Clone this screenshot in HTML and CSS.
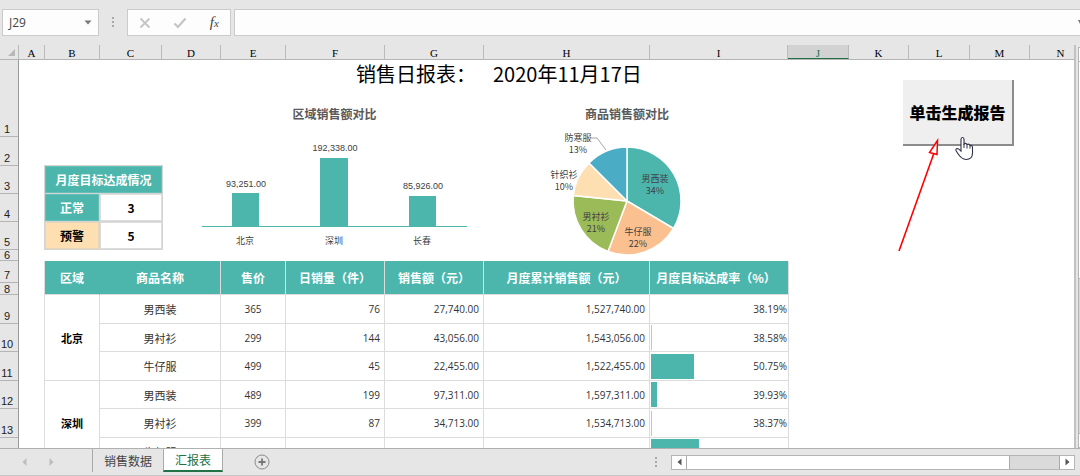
FILE: index.html
```html
<!DOCTYPE html>
<html lang="zh-CN">
<head>
<meta charset="utf-8">
<title>销售日报表</title>
<link rel="stylesheet" href="styles.css">
</head>
<body>
<header class="formula-bar">
  <button class="name-box" type="button"><span>J29</span><svg width="8" height="5" viewBox="0 0 8 5"><path d="M0.500 0.500h7L4 4.500z" fill="#777"/></svg></button>
  <svg class="grip" width="3" height="11" viewBox="0 0 3 11" fill="#a8a8a8"><path d="M0 0h2v2H0zM0 4h2v2H0zM0 8h2v2H0z"/></svg>
  <div class="formula-tools">
    <button type="button" aria-label="取消"><svg width="12" height="12" viewBox="0 0 12 12"><path d="M1.500 1.500l9 9M10.500 1.500l-9 9" stroke="#c4c4c4" stroke-width="1.800"/></svg></button>
    <button type="button" aria-label="输入"><svg width="14" height="12" viewBox="0 0 14 12"><path d="M1.500 6.500l3.500 3.500L12.500 1.500" fill="none" stroke="#c4c4c4" stroke-width="2.200"/></svg></button>
    <button type="button" class="fx" aria-label="插入函数">f<small>x</small></button>
  </div>
  <input class="formula-input" type="text" aria-label="编辑栏">
  <svg class="expand" width="2" height="4" viewBox="0 0 2 4"><path d="M0 0h2v4z" fill="#777"/></svg>
</header>

<main class="workbook">
  <div class="grid-area">
    <div class="columns">
      <span class="corner"><svg width="7" height="7" viewBox="0 0 7 7"><path d="M7 0v7H0z" fill="#b8b8b8"/></svg></span>
      <span>A</span><span>B</span><span>C</span><span>D</span><span>E</span><span>F</span><span>G</span><span>H</span><span>I</span><span class="selected">J</span><span>K</span><span>L</span><span>M</span><span>N</span>
    </div>
    <div class="body">
      <div class="rows">
        <span>1</span><span>2</span><span>3</span><span>4</span><span>5</span><span>6</span><span>7</span><span>8</span><span>9</span><span>10</span><span>11</span><span>12</span><span>13</span><span></span>
      </div>
      <div class="sheet">
        <section class="report">
          <h1 class="title"><span>销售日报表：</span><span>2020年11月17日</span></h1>
          <div class="overview">
            <table class="summary">
              <colgroup><col class="c-state"><col></colgroup>
              <tr><th colspan="2">月度目标达成情况</th></tr>
              <tr><th>正常</th><td>3</td></tr>
              <tr><th class="warn">预警</th><td>5</td></tr>
            </table>
            <figure class="chart bar-chart">
              <figcaption>区域销售额对比</figcaption>
              <svg viewBox="0 0 265 128" width="265" height="128">
                <g fill="#4cb6ad"><path d="M30 70h27v33H30zM118 35h28v68h-28zM207 73h27v30h-27z"/><path d="M0 103h265v1H0z"/></g>
                <g class="values"><text x="44" y="64">93,251.00</text><text x="133" y="28">192,338.00</text><text x="221" y="66">85,926.00</text></g>
                <g class="labels"><text x="43" y="121">北京</text><text x="132" y="121">深圳</text><text x="220" y="121">长春</text></g>
              </svg>
            </figure>
            <figure class="chart pie-chart">
              <figcaption>商品销售额对比</figcaption>
              <svg viewBox="0 0 154 132" width="154" height="132">
                <g stroke="#fff" stroke-width="1.500" stroke-linejoin="round">
                  <path d="M77 78V24A54 54 0 0 1 123.500 105.500Z" fill="#4cb6ad"/>
                  <path d="M77 78L123.500 105.500A54 54 0 0 1 58 128.500Z" fill="#fac08f"/>
                  <path d="M77 78L58 128.500A54 54 0 0 1 23.300 72.500Z" fill="#9bbb59"/>
                  <path d="M77 78L23.300 72.500A54 54 0 0 1 39 40Z" fill="#fedfb2"/>
                  <path d="M77 78L39 40A54 54 0 0 1 77 24Z" fill="#4bacc6"/>
                </g>
                <path d="M41 15h6l9 12" fill="none" stroke="#a6a6a6"/>
                <g class="slices">
                  <text x="105" y="59">男西装</text><text x="105" y="71">34%</text>
                  <text x="88" y="112">牛仔服</text><text x="88" y="124">22%</text>
                  <text x="46" y="97">男衬衫</text><text x="46" y="109">21%</text>
                  <text x="14" y="55">针织衫</text><text x="14" y="67">10%</text>
                  <text x="28" y="18">防寒服</text><text x="28" y="30">13%</text>
                </g>
              </svg>
            </figure>
          </div>
          <table class="data">
            <colgroup><col class="c-region"><col class="c-name"><col class="c-price"><col class="c-qty"><col class="c-qty"><col class="c-total"><col class="c-rate"></colgroup>
            <thead><tr><th>区域</th><th>商品名称</th><th>售价</th><th>日销量（件）</th><th>销售额（元）</th><th>月度累计销售额（元）</th><th>月度目标达成率（%）</th></tr></thead>
            <tbody>
              <tr><th rowspan="3">北京</th><td>男西装</td><td>365</td><td>76</td><td>27,740.00</td><td>1,527,740.00</td><td>38.19%</td></tr>
              <tr><td>男衬衫</td><td>299</td><td>144</td><td>43,056.00</td><td>1,543,056.00</td><td><div class="rate"><i class="faint" style="width:1px"></i>38.58%</div></td></tr>
              <tr><td>牛仔服</td><td>499</td><td>45</td><td>22,455.00</td><td>1,522,455.00</td><td><div class="rate"><i style="width:43px"></i>50.75%</div></td></tr>
              <tr><th rowspan="3">深圳</th><td>男西装</td><td>489</td><td>199</td><td>97,311.00</td><td>1,597,311.00</td><td><div class="rate"><i style="width:6px"></i>39.93%</div></td></tr>
              <tr><td>男衬衫</td><td>399</td><td>87</td><td>34,713.00</td><td>1,534,713.00</td><td><div class="rate"><i class="faint" style="width:1px"></i>38.37%</div></td></tr>
              <tr><td>牛仔服</td><td>599</td><td>101</td><td>60,314.00</td><td>1,560,314.00</td><td><div class="rate"><i style="width:48px"></i>52.14%</div></td></tr>
            </tbody>
          </table>
        </section>
        <div class="action">
          <button class="run" type="button">单击生成报告</button>
          <svg class="pointer" width="120" height="120" viewBox="0 0 120 120">
            <path d="M4 115L39 17" stroke="#f00" stroke-width="1.600"/>
            <path d="M42.500 4.500L34.500 16.500L42 18.500Z" fill="#fff" stroke="#f00" stroke-width="1.500"/>
            <path d="M66 15V3.500Q66 1.500 67.500 1.500T69 3.500V8Q70.500 6.500 72 8.500Q74 7.500 75 9.500Q77.500 9 77.500 11.500V17C77.500 21 75 23.500 71 23.500C67 23.500 65 21 62.500 17L61 14.500Q60.500 12.500 62.500 12.500Q64 13 66 15Z" fill="#fff" stroke="#2d3047" stroke-width="1.100"/>
            <path d="M69 8v4M72 8.500v4M75 9.500v3" stroke="#2d3047"/>
          </svg>
        </div>
      </div>
    </div>
  </div>
  <div class="v-scroll"><span class="box"></span><span class="thumb"></span><span class="track"></span><span class="box"></span></div>
</main>

<footer class="tabs">
  <button class="step" type="button" aria-label="上一个"><svg width="5" height="8" viewBox="0 0 5 8"><path d="M4.500 0v8L0.500 4z" fill="#bdbdbd"/></svg></button>
  <button class="step" type="button" aria-label="下一个"><svg width="5" height="8" viewBox="0 0 5 8"><path d="M0.500 0v8l4-4z" fill="#bdbdbd"/></svg></button>
  <nav>
    <button class="tab" type="button">销售数据</button>
    <button class="tab active" type="button">汇报表</button>
  </nav>
  <button class="add" type="button" aria-label="新建工作表"><svg width="16" height="16" viewBox="0 0 16 16" fill="none"><circle cx="8" cy="8" r="7" stroke="#8a8a8a"/><path d="M8 4.500v7M4.500 8h7" stroke="#777" stroke-width="1.800"/></svg></button>
  <svg class="grip end" width="3" height="11" viewBox="0 0 3 11" fill="#a8a8a8"><path d="M0 0h2v2H0zM0 4h2v2H0zM0 8h2v2H0z"/></svg>
  <div class="h-scroll">
    <button type="button" aria-label="向左"><svg width="5" height="8" viewBox="0 0 5 8"><path d="M4.500 0.500v7L0.500 4z" fill="#555"/></svg></button>
    <span class="h-thumb"></span><span class="h-track"></span>
    <button type="button" aria-label="向右"><svg width="5" height="8" viewBox="0 0 5 8"><path d="M0.500 0.500v7l4-3.500z" fill="#555"/></svg></button>
  </div>
</footer>
</body>
</html>
```
FILE: styles.css
```css
* { box-sizing: border-box; }
body {
  margin: 0;
  height: 100vh;
  display: flex;
  flex-direction: column;
  overflow: hidden;
  background: #e6e6e6;
  color: #000;
  font: 12px/16px "Noto Sans CJK SC", sans-serif;
}
button { font: inherit; color: inherit; padding: 0; border: 0; background: none; }
svg { display: block; flex: none; }

/* formula bar */
.formula-bar { display: flex; align-items: center; height: 45px; flex: none; position: relative; }
.name-box, .formula-tools, .formula-input { height: 27px; border: 1px solid #cbcbcb; background: #fdfdfd; }
.name-box {
  width: 97px; margin-left: 2px; padding: 0 6px;
  display: flex; align-items: center; justify-content: space-between;
  font: 12px/16px "Open Sans", sans-serif; color: #444;
}
.grip { margin: 0 12px 0 13px; }
.formula-tools { width: 104px; display: flex; justify-content: space-around; align-items: center; }
.fx { font: italic 15px/18px "Liberation Serif", serif; color: #444; }
.fx small { font-size: 11px; }
.formula-input { flex: 1; min-width: 0; margin-left: 3px; border-right: 0; }
.expand { position: absolute; right: 0; top: 20px; }

/* grid */
.workbook { flex: 1; min-height: 0; display: flex; }
.grid-area { flex: 1; min-width: 0; display: flex; flex-direction: column; overflow: hidden; border-right: 2px solid #c2c2c2; }
.columns {
  display: grid;
  grid-template-columns: 19px 26px 55px 62px 59px 65px 99px 99px 166px 138px 61px 60px 61px 60px 62px;
  height: 15px; flex: none;
  border-bottom: 1px solid #b5b5b5;
  font: 11px/16px "Liberation Serif", serif;
  text-align: center;
}
.columns span { border-right: 1px solid #bbb; height: 14px; }
.columns .corner { display: flex; align-items: center; justify-content: flex-end; padding-right: 3px; }
.columns .selected { background: #d2d2d2; color: #217346; border-bottom: 1px solid #217346; }
.body { flex: 1; min-height: 0; display: flex; }
.rows {
  flex: none; width: 19px; overflow: hidden; border-right: 1px solid #999;
  display: grid;
  grid-template-rows: 77px 29px 28px 28px 28px 11px 22px 12px 29px 28px 29px 28px 29px 28px;
  font: 11px/12px "Liberation Sans", sans-serif; color: #222;
}
.rows span {
  display: flex; align-items: flex-end; justify-content: center;
  padding: 0 4px 1px 0; border-bottom: 1px solid #b5b5b5; overflow: hidden;
}
.rows span:nth-child(6), .rows span:nth-child(8) { align-items: center; padding-bottom: 0; line-height: 10px; }
.sheet { flex: 1; min-width: 0; display: flex; background: #fff; overflow: hidden; }
.report { flex: none; padding-left: 25px; }
.title { display: flex; gap: 17px; margin: 0; padding-left: 312px; font-size: 20px; font-weight: 400; line-height: 28px; }
.overview { display: flex; align-items: flex-start; height: 173px; }

/* target summary */
.summary {
  width: 119px; margin-top: 77px; border-collapse: separate; border-spacing: 1px;
  background: #d4d4d4; table-layout: fixed; text-align: center;
}
.c-state { width: 54px; }
.summary th, .summary td { height: 27px; padding: 0; font-size: 12px; font-weight: 700; line-height: 16px; border: 1px solid #ddd; }
.summary th { background: #4cb6ad; color: #fff; border-color: #65c0b8; }
.summary td { background: #fff; }
.summary .warn { background: #fedfb2; color: #000; border-color: #e8d6b8; }

/* charts */
.chart { margin: 0; text-align: center; }
.chart figcaption { font-weight: 700; color: #595959; line-height: 18px; }
.bar-chart { margin: 17px 0 0 39px; }
.pie-chart { margin: 17px 0 0 83px; }
.chart text { text-anchor: middle; fill: #404040; }
.values { font: 9px "Liberation Sans", sans-serif; }
.labels, .slices { font: 9px "Noto Sans CJK SC", sans-serif; }

/* sales table */
.data { width: 745px; table-layout: fixed; border-collapse: separate; border-spacing: 0; border-left: 1px solid #ddd; }
.c-region { width: 55px; } .c-name { width: 121px; } .c-price { width: 65px; }
.c-qty { width: 99px; } .c-total { width: 166px; } .c-rate { width: 139px; }
.data th, .data td { padding: 0; border: solid #dcdcdc; border-width: 0 1px 1px 0; }
.data thead th { height: 34px; background: #4cb6ad; color: #fff; font-weight: 700; white-space: nowrap; }
.data thead th:first-child { border-right-color: #4cb6ad; }
.data thead th:last-child { padding-right: 6px; }
.data tbody tr { height: 28px; }
.data tbody tr:nth-child(odd) { height: 29px; }
.data tbody th { font-size: 11px; font-weight: 700; }
.data td { font: 10px/14px "Open Sans", sans-serif; color: #333; text-align: right; padding-right: 4px; }
.data td:nth-last-child(6) { font: 11px/14px "Noto Sans CJK SC", sans-serif; text-align: center; padding: 0; }
.data td:nth-last-child(5) { text-align: center; padding: 0; }
.data td:last-child { padding: 0 1px; }
.rate { display: flex; align-items: center; justify-content: space-between; height: 25px; }
.rate i { height: 25px; background: #4cb6ad; }
.rate .faint { background: #9bd8d2; }

/* report button */
.action { position: relative; flex: none; margin: 20px 0 0 114px; align-self: flex-start; }
.run {
  width: 111px; height: 66px; background: #efefef;
  border: solid #8c8c8c; border-width: 0 2px 2px 0;
  font-size: 16px; font-weight: 900; white-space: nowrap;
}
.pointer { position: absolute; left: -8px; top: 56px; }

/* scroll bars */
.v-scroll { flex: none; width: 4px; display: flex; flex-direction: column; padding: 2px 0 0 2px; }
.v-scroll span { border-left: 1px solid #b5b5b5; }
.v-scroll .box { height: 15px; background: #fff; border-top: 1px solid #b5b5b5; border-bottom: 1px solid #b5b5b5; }
.v-scroll .thumb { flex: 7; background: #fff; border-bottom: 1px solid #b5b5b5; }
.v-scroll .track { flex: 5; background: #dadada; }

/* sheet tabs */
.tabs { flex: none; height: 28px; display: flex; align-items: center; border-top: 1px solid #b0b0b0; border-bottom: 1px solid #c6c6c6; color: #444; }
.step { margin-left: 22px; }
.tabs nav { display: flex; align-self: stretch; margin-left: 38px; padding-bottom: 3px; }
.tab { padding: 0 11px; border-left: 1px solid #aaa; font-size: 12px; line-height: 18px; }
.tab.active { background: #fff; color: #217346; border-right: 1px solid #aaa; border-bottom: 2px solid #217346; }
.add { margin-left: 31px; }
.grip.end { margin: 0 13px 0 auto; }
.h-scroll { display: flex; height: 15px; width: 404px; flex: none; margin-right: 5px; border: 1px solid #b5b5b5; background: #dadada; }
.h-scroll button { width: 14px; background: #fff; display: flex; align-items: center; justify-content: center; }
.h-thumb { flex: 13; background: #fff; border: solid #aaa; border-width: 0 1px; }
.h-track { flex: 2; border-right: 1px solid #aaa; }
```
